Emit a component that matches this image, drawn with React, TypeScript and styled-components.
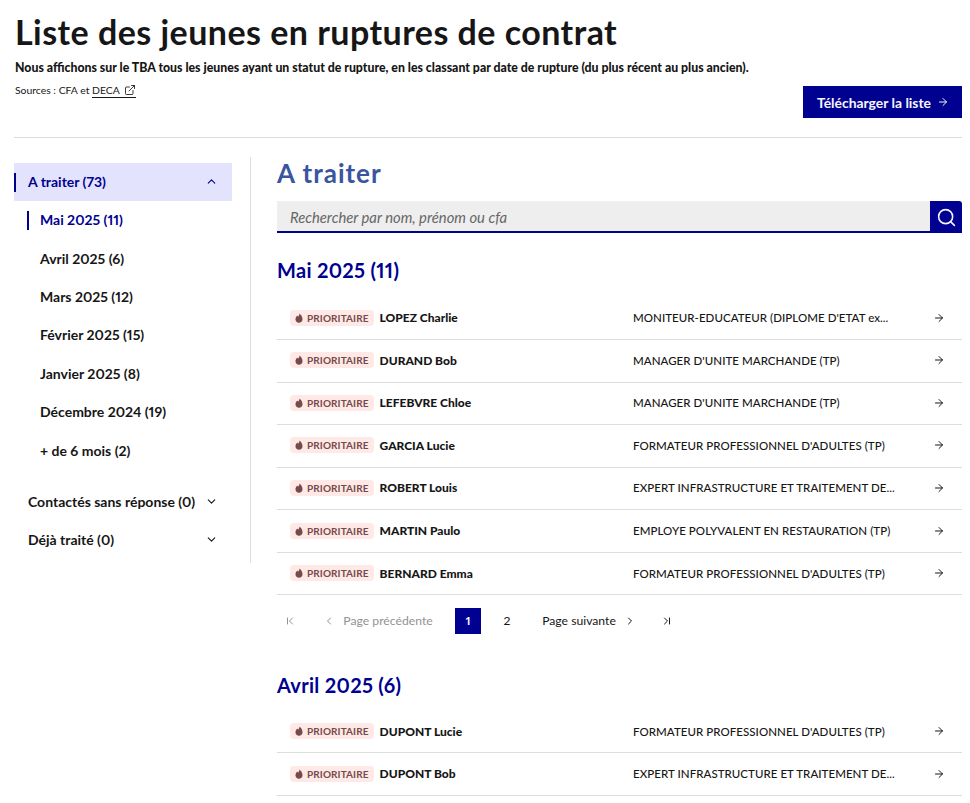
import React from 'react';
import styled, { createGlobalStyle } from 'styled-components';
import { LuArrowRight, LuChevronDown, LuChevronLeft, LuChevronRight, LuChevronUp, LuChevronFirst, LuChevronLast, LuExternalLink, LuSearch } from 'react-icons/lu';

const GlobalStyle = createGlobalStyle`
  html, body { margin: 0; padding: 0; background: #fff; }
  body {
    font-family: Lato, "Noto Sans", "Liberation Sans", sans-serif;
    font-variant-numeric: proportional-nums;
    color: #161616;
    overflow: hidden;
  }
  * { box-sizing: border-box; }
`;

const Page = styled.div`
  width: 970px;
  height: 803px;
  overflow: hidden;
  padding: 0 8px 0 14px;
`;

const Header = styled.header`
  height: 138px;
  padding-top: 12px;
  border-bottom: 1px solid #dddddd;
`;

const Title = styled.h1`
  margin: 0 0 0 1px;
  font-size: 34px;
  line-height: 40px;
  font-weight: 700;
  letter-spacing: 0.46px;
  color: #161616;
`;

const Intro = styled.p`
  margin: 7px 0 0 1px;
  font-size: 12.3px;
  line-height: 18px;
  font-weight: 900;
`;

const HeaderBottom = styled.div`
  display: flex;
  justify-content: space-between;
  align-items: flex-start;
`;

const Sources = styled.p`
  margin: 5px 0 0 1px;
  font-size: 10.4px;
  line-height: 16px;
`;

const SourceLink = styled.a`
  display: inline-flex;
  align-items: center;
  gap: 4px;
  color: #161616;
  border-bottom: 1px solid #161616;
  height: 15px;
  svg { font-size: 12px; stroke-width: 1.7; }
`;

const DownloadButton = styled.button`
  display: flex;
  align-items: center;
  gap: 6px;
  height: 32px;
  margin-top: 9px;
  padding: 0 13px 0 14px;
  border: none;
  background: #000091;
  color: #f5f5fe;
  font: 700 13.9px Lato, sans-serif;
  svg { font-size: 12px; }
`;

const Body = styled.div`
  display: flex;
  align-items: flex-start;
  padding-top: 19px;
`;

const Sidebar = styled.nav`
  width: 237px;
  height: 406px;
  padding: 6px 18px 0 0;
  border-right: 1px solid #dddddd;
  flex-shrink: 0;
`;

const SectionRow = styled.div<{ $active?: boolean }>`
  display: flex;
  align-items: center;
  justify-content: space-between;
  height: 38px;
  padding: 0 14px 1px 14px;
  font-size: 14px;
  font-weight: 700;
  position: relative;
  background: ${({ $active }) => ($active ? '#e3e3fd' : 'transparent')};
  color: ${({ $active }) => ($active ? '#000091' : '#161616')};
  svg { font-size: 13px; }
  ${({ $active }) =>
    $active &&
    `&::before {
      content: '';
      position: absolute;
      left: 0;
      top: 10px;
      bottom: 9px;
      width: 2px;
      background: #000091;
    }`}
`;

const SubList = styled.div`
  margin-bottom: 13px;
`;

const SubRow = styled.div<{ $active?: boolean }>`
  display: flex;
  align-items: center;
  height: 38.4px;
  padding: 0 0 1px 26px;
  font-size: 14px;
  font-weight: 700;
  position: relative;
  color: ${({ $active }) => ($active ? '#000091' : '#161616')};
  ${({ $active }) =>
    $active &&
    `&::before {
      content: '';
      position: absolute;
      left: 13px;
      top: 10px;
      bottom: 9px;
      width: 2px;
      background: #000091;
    }`}
`;

const Content = styled.main`
  flex: 1;
  padding-left: 26px;
  min-width: 0;
`;

const MainTitle = styled.h2`
  margin: 0;
  font-size: 26px;
  line-height: 33px;
  font-weight: 700;
  letter-spacing: 1px;
  color: #3a55a0;
`;

const Search = styled.div`
  display: flex;
  margin-top: 11px;
  height: 32px;
`;

const SearchInput = styled.div`
  flex: 1;
  display: flex;
  align-items: center;
  padding: 1px 0 0 13px;
  background: #eeeeee;
  border-bottom: 2px solid #000091;
  font-size: 14.8px;
  font-style: italic;
  color: #666666;
`;

const SearchButton = styled.div`
  width: 32px;
  display: flex;
  align-items: center;
  justify-content: center;
  background: #000091;
  border-top-right-radius: 3px;
  color: #f5f5fe;
  svg { font-size: 21px; stroke-width: 1.8; }
`;

const MonthTitle = styled.h3<{ $top: number }>`
  margin: ${({ $top }) => $top}px 0 0;
  font-size: 20px;
  line-height: 26px;
  font-weight: 700;
  letter-spacing: 0.3px;
  color: #000091;
`;

const List = styled.div<{ $top: number }>`
  margin-top: ${({ $top }) => $top}px;
`;

const Row = styled.div`
  display: grid;
  grid-template-columns: 343px 283px 1fr;
  align-items: center;
  height: 42.55px;
  padding: 0 17px 1px 13px;
  border-bottom: 1px solid #dddddd;
`;

const Person = styled.div`
  display: flex;
  align-items: center;
  gap: 6px;
`;

const Badge = styled.span`
  display: inline-flex;
  align-items: center;
  gap: 4px;
  height: 16px;
  padding: 0 5px;
  border-radius: 4px;
  background: #ffe9e6;
  color: #754a4a;
  font-size: 10px;
  font-weight: 700;
  letter-spacing: 0.1px;
  svg { width: 8px; height: 10px; }
`;

const Name = styled.span`
  font-size: 12px;
  font-weight: 900;
  color: #161616;
`;

const Formation = styled.span`
  font-size: 11.5px;
  font-weight: 500;
  letter-spacing: 0.05px;
  white-space: nowrap;
  overflow: hidden;
  color: #161616;
`;

const RowArrow = styled.span`
  display: flex;
  justify-content: flex-end;
  color: #161616;
  svg { font-size: 12px; }
`;

const Pagination = styled.div`
  display: flex;
  align-items: center;
  margin-top: 12.5px;
  height: 26px;
  font-size: 12.2px;
`;

const PageItem = styled.span<{ $disabled?: boolean; $width: number; $gap?: number; $left?: number }>`
  display: flex;
  align-items: center;
  justify-content: center;
  gap: ${({ $gap }) => $gap ?? 0}px;
  height: 26px;
  width: ${({ $width }) => $width}px;
  margin-left: ${({ $left }) => $left ?? 0}px;
  color: ${({ $disabled }) => ($disabled ? '#929292' : '#161616')};
  svg { font-size: 12px; }
`;

const PageNumber = styled.span<{ $current?: boolean; $left?: number }>`
  display: flex;
  align-items: center;
  justify-content: center;
  width: 26px;
  height: 26px;
  margin-left: ${({ $left }) => $left ?? 0}px;
  font-weight: ${({ $current }) => ($current ? 700 : 400)};
  background: ${({ $current }) => ($current ? '#000091' : 'transparent')};
  color: ${({ $current }) => ($current ? '#f5f5fe' : '#161616')};
`;

const Flame = () => (
  <svg viewBox="0 0 10 12" fill="currentColor" aria-hidden="true">
    <path d="M5.4 0.3c0.5 2-0.6 2.9-1.6 4C3.5 3.8 3.2 3.4 3 3 1.5 4.3 0.6 5.900 0.6 7.500 0.6 10 2.600 11.800 5 11.800s4.400-1.800 4.400-4.300C9.400 4.400 7.500 1.700 5.400 0.300z" />
  </svg>
);

type Youth = { name: string; formation: string };

const mai: Youth[] = [
  { name: 'LOPEZ Charlie', formation: "MONITEUR-EDUCATEUR (DIPLOME D'ETAT ex..." },
  { name: 'DURAND Bob', formation: "MANAGER D'UNITE MARCHANDE (TP)" },
  { name: 'LEFEBVRE Chloe', formation: "MANAGER D'UNITE MARCHANDE (TP)" },
  { name: 'GARCIA Lucie', formation: "FORMATEUR PROFESSIONNEL D'ADULTES (TP)" },
  { name: 'ROBERT Louis', formation: 'EXPERT INFRASTRUCTURE ET TRAITEMENT DE...' },
  { name: 'MARTIN Paulo', formation: 'EMPLOYE POLYVALENT EN RESTAURATION (TP)' },
  { name: 'BERNARD Emma', formation: "FORMATEUR PROFESSIONNEL D'ADULTES (TP)" },
];

const avril: Youth[] = [
  { name: 'DUPONT Lucie', formation: "FORMATEUR PROFESSIONNEL D'ADULTES (TP)" },
  { name: 'DUPONT Bob', formation: 'EXPERT INFRASTRUCTURE ET TRAITEMENT DE...' },
];

const months = ['Avril 2025 (6)', 'Mars 2025 (12)', 'Février 2025 (15)', 'Janvier 2025 (8)', 'Décembre 2024 (19)', '+ de 6 mois (2)'];

const YouthList: React.FC<{ items: Youth[]; top: number }> = ({ items, top }) => (
  <List $top={top}>
    {items.map((y) => (
      <Row key={y.name}>
        <Person>
          <Badge>
            <Flame />
            PRIORITAIRE
          </Badge>
          <Name>{y.name}</Name>
        </Person>
        <Formation>{y.formation}</Formation>
        <RowArrow>
          <LuArrowRight />
        </RowArrow>
      </Row>
    ))}
  </List>
);

export default function App() {
  return (
    <Page>
      <GlobalStyle />
      <Header>
        <Title>Liste des jeunes en ruptures de contrat</Title>
        <Intro>Nous affichons sur le TBA tous les jeunes ayant un statut de rupture, en les classant par date de rupture (du plus récent au plus ancien).</Intro>
        <HeaderBottom>
          <Sources>
            Sources : CFA et{' '}
            <SourceLink>
              DECA <LuExternalLink />
            </SourceLink>
          </Sources>
          <DownloadButton>
            Télécharger la liste <LuArrowRight />
          </DownloadButton>
        </HeaderBottom>
      </Header>
      <Body>
        <Sidebar>
          <SectionRow $active>
            A traiter (73) <LuChevronUp />
          </SectionRow>
          <SubList>
            <SubRow $active>Mai 2025 (11)</SubRow>
            {months.map((m) => (
              <SubRow key={m}>{m}</SubRow>
            ))}
          </SubList>
          <SectionRow>
            Contactés sans réponse (0) <LuChevronDown />
          </SectionRow>
          <SectionRow>
            Déjà traité (0) <LuChevronDown />
          </SectionRow>
        </Sidebar>
        <Content>
          <MainTitle>A traiter</MainTitle>
          <Search>
            <SearchInput>Rechercher par nom, prénom ou cfa</SearchInput>
            <SearchButton>
              <LuSearch />
            </SearchButton>
          </Search>
          <MonthTitle $top={24}>Mai 2025 (11)</MonthTitle>
          <YouthList items={mai} top={14.5} />
          <Pagination>
            <PageItem $disabled $width={26}><LuChevronFirst /></PageItem>
            <PageItem $disabled $width={150} $gap={8}><LuChevronLeft /> Page précédente</PageItem>
            <PageNumber $current $left={2}>1</PageNumber>
            <PageNumber $left={13}>2</PageNumber>
            <PageItem $width={112} $gap={8} $left={13}>Page suivante <LuChevronRight /></PageItem>
            <PageItem $width={26} $left={9}><LuChevronLast /></PageItem>
          </Pagination>
          <MonthTitle $top={38}>Avril 2025 (6)</MonthTitle>
          <YouthList items={avril} top={13} />
        </Content>
      </Body>
    </Page>
  );
}
